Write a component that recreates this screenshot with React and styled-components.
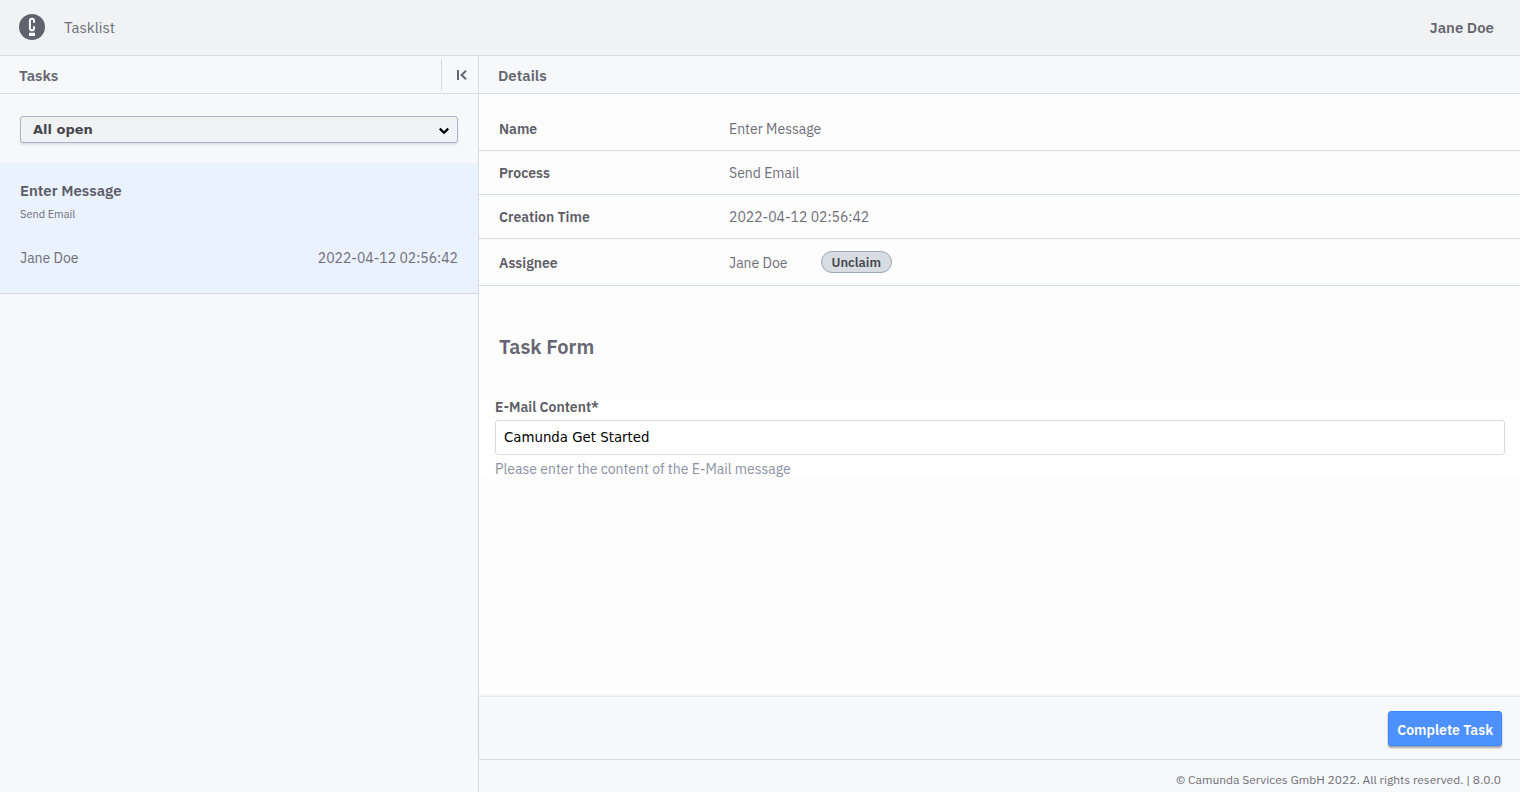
import React from 'react';
import styled, { createGlobalStyle, css } from 'styled-components';

const line = '#d5dae3';
const ink = '#666671';
const inkDark = '#5c5c66';
const inkLight = '#6e6e79';

const GlobalStyle = createGlobalStyle`
  *, *::before, *::after { box-sizing: border-box; }
  body {
    margin: 0;
    font-family: 'IBM Plex Sans', Roboto, 'Liberation Sans', sans-serif;
    font-size: 14px;
    line-height: 20px;
    color: ${ink};
    background: #f7f8fa;
  }
  h1, h2, h3, p, dl, dd, ul { margin: 0; padding: 0; }
  button, select, input { margin: 0; }
`;

const Page = styled.div`
  display: flex;
  flex-direction: column;
  min-height: 100vh;
`;

const Header = styled.header`
  display: flex;
  align-items: center;
  justify-content: space-between;
  height: 56px;
  padding: 0 26px 0 19px;
  background: #f1f2f4;
  border-bottom: 1px solid ${line};
  font-size: 15px;
`;

const Brand = styled.a`
  display: flex;
  align-items: center;
  gap: 19px;
  color: ${inkLight};
  text-decoration: none;

  > svg { margin-bottom: 2px; }
`;

const UserName = styled.span`
  font-weight: 600;
`;

const Columns = styled.main`
  flex: 1;
  display: grid;
  grid-template-columns: 479px minmax(0, 1fr);
`;

const Sidebar = styled.section`
  border-right: 1px solid ${line};
  background: #f7f8fa;
`;

const PanelHeader = styled.div`
  display: flex;
  align-items: center;
  justify-content: space-between;
  height: 38px;
  padding-left: 19px;
  background: #f7f8fa;
  border-bottom: 1px solid ${line};
`;

const PanelTitle = styled.h2`
  padding-top: 2px;
  font-size: 15px;
  font-weight: 600;
`;

const CollapseButton = styled.button`
  display: flex;
  align-items: center;
  justify-content: center;
  width: 37px;
  height: 32px;
  padding: 0 0 0 3px;
  border: 0;
  border-left: 1px solid ${line};
  background: none;
  color: ${ink};
`;

const FilterBar = styled.div`
  display: grid;
  padding: 22px 20px 20px;
`;

const SelectShell = styled.div`
  display: grid;
  align-items: center;

  > * { grid-area: 1 / 1; }
  > svg {
    justify-self: end;
    margin: 3px 9px 0 0;
    pointer-events: none;
  }
`;

const Select = styled.select`
  appearance: none;
  height: 27px;
  padding: 0 32px 1px 12px;
  border: 1px solid #a9b6c8;
  border-radius: 3px;
  background: #f1f2f4;
  box-shadow: 0 2px 2px rgba(60, 60, 75, 0.12);
  color: #45464e;
  font: bold 13px 'DejaVu Sans', sans-serif;
`;

const TaskList = styled.ul`
  list-style: none;
`;

const TaskItem = styled.li`
  display: flex;
  flex-direction: column;
  height: 131px;
  padding: 18px 20px 25px;
  border-bottom: 1px solid ${line};
  background: #eaf1ff;
`;

const TaskName = styled.h3`
  color: ${inkDark};
  font-size: 15px;
  font-weight: 600;
`;

const TaskProcess = styled.span`
  margin-top: 3px;
  color: ${inkLight};
  font-size: 11px;
`;

const TaskMeta = styled.div`
  display: flex;
  justify-content: space-between;
  margin-top: auto;
  color: ${inkLight};
`;

const Content = styled.section`
  display: flex;
  flex-direction: column;
  background: #fdfdfd;
`;

const DetailsTable = styled.table`
  width: 100%;
  margin-top: 13px;
  border-collapse: separate;
  border-spacing: 0;
`;

const cell = css`
  height: ${(p) => (p.$tall ? 47 : 44)}px;
  padding: ${(p) => (p.$tall ? 2 : 0)}px 0 0;
  border-bottom: 1px solid ${line};
  text-align: left;
`;

const Label = styled.th`
  ${cell}
  width: 250px;
  padding-left: 20px;
  color: ${inkDark};
  font-weight: 600;
`;

const Value = styled.td`
  ${cell}
  color: ${inkLight};
`;

const Assignee = styled.div`
  display: flex;
  align-items: center;
  gap: 34px;
`;

const PillButton = styled.button`
  height: 22px;
  margin-bottom: 2px;
  padding: 1px 10px 0 9px;
  border: 1px solid #9ba8b8;
  border-radius: 11px;
  background: #d8dce3;
  color: #45464e;
  font: 600 13px/20px 'IBM Plex Sans', Roboto, sans-serif;
`;

const FormTitle = styled.h2`
  margin: 48px 20px 38px;
  font-size: 20px;
  line-height: 26px;
  font-weight: 600;
`;

const Form = styled.form`
  display: flex;
  flex: 1;
  flex-direction: column;
`;

const Field = styled.div`
  display: flex;
  flex-direction: column;
  padding: 0 15px 0 16px;
  background: #fff;
`;

const FieldLabel = styled.label`
  padding-bottom: 4px;
  color: ${inkDark};
  font-weight: 600;
  line-height: 18px;
`;

const TextInput = styled.input`
  height: 35px;
  padding: 0 8px 1px;
  border: 1px solid ${line};
  border-radius: 3px;
  background: #fff;
  color: #000;
  font-family: 'DejaVu Sans', sans-serif;
`;

const Hint = styled.p`
  padding-top: 6px;
  color: #8b91a3;
  line-height: 16px;
`;

const Actions = styled.div`
  display: flex;
  justify-content: flex-end;
  margin-top: auto;
  padding: 14px 18px 13px;
  background: #f7f8fa;
  border-top: 1px solid #e6e8ec;
  box-shadow: 0 -1px 2px rgba(60, 60, 75, 0.07);
`;

const PrimaryButton = styled.button`
  height: 35px;
  padding: 2px 8px 0;
  border: 1px solid #3c85fb;
  border-radius: 3px;
  background: #4c91ff;
  box-shadow: 0 2px 2px rgba(0, 0, 0, 0.35);
  color: #fff;
  font: 600 14px/20px 'IBM Plex Sans', Roboto, sans-serif;
`;

const Footer = styled.footer`
  padding: 10px 19px 2px;
  background: #f7f8fa;
  border-top: 1px solid ${line};
  color: ${inkLight};
  font-size: 12px;
  text-align: right;
`;

function Logo() {
  return (
    <svg width="26" height="26" viewBox="0 0 26 26" aria-hidden="true">
      <circle cx="13" cy="13" r="13" fill="#62626e" />
      <path
        d="M15 8.8V6.6Q15 4.8 13 4.8Q10.9 4.8 10.9 6.8V14.2Q10.9 16.3 13 16.3Q15 16.3 15 14.2V12.2"
        fill="none"
        stroke="#fff"
        strokeWidth="2"
      />
      <path d="M10 18.8h6V22h-6z" fill="#fff" />
    </svg>
  );
}

const details = [
  ['Name', 'Enter Message'],
  ['Process', 'Send Email'],
  ['Creation Time', '2022-04-12 02:56:42'],
];

export default function App() {
  return (
    <Page>
      <GlobalStyle />
      <Header>
        <Brand href="#">
          <Logo />
          <span>Tasklist</span>
        </Brand>
        <UserName>Jane Doe</UserName>
      </Header>
      <Columns>
        <Sidebar>
          <PanelHeader>
            <PanelTitle>Tasks</PanelTitle>
            <CollapseButton type="button" aria-label="Collapse tasks">
              <svg width="11" height="10" viewBox="0 0 11 10" fill="none" stroke="currentColor" strokeWidth="2" aria-hidden="true">
                <path d="M2 0v10M10 0.8L5.6 5L10 9.2" />
              </svg>
            </CollapseButton>
          </PanelHeader>
          <FilterBar>
            <SelectShell>
              <Select aria-label="Filter tasks" defaultValue="open">
                <option value="open">All open</option>
              </Select>
              <svg width="10" height="8" viewBox="0 0 10 8" fill="none" stroke="#000" strokeWidth="2.2" aria-hidden="true">
                <path d="M0.8 1.6L5 5.8L9.2 1.6" />
              </svg>
            </SelectShell>
          </FilterBar>
          <TaskList>
            <TaskItem>
              <TaskName>Enter Message</TaskName>
              <TaskProcess>Send Email</TaskProcess>
              <TaskMeta>
                <span>Jane Doe</span>
                <span>2022-04-12 02:56:42</span>
              </TaskMeta>
            </TaskItem>
          </TaskList>
        </Sidebar>
        <Content>
          <PanelHeader>
            <PanelTitle>Details</PanelTitle>
          </PanelHeader>
          <DetailsTable>
            <tbody>
              {details.map(([label, value]) => (
                <tr key={label}>
                  <Label scope="row">{label}</Label>
                  <Value>{value}</Value>
                </tr>
              ))}
              <tr>
                <Label scope="row" $tall>Assignee</Label>
                <Value $tall>
                  <Assignee>
                    Jane Doe
                    <PillButton type="button">Unclaim</PillButton>
                  </Assignee>
                </Value>
              </tr>
            </tbody>
          </DetailsTable>
          <Form onSubmit={(event) => event.preventDefault()}>
            <FormTitle>Task Form</FormTitle>
            <Field>
              <FieldLabel htmlFor="email-content">E-Mail Content*</FieldLabel>
              <TextInput id="email-content" type="text" defaultValue="Camunda Get Started" />
              <Hint>Please enter the content of the E-Mail message</Hint>
            </Field>
            <Actions>
              <PrimaryButton type="submit">Complete Task</PrimaryButton>
            </Actions>
          </Form>
          <Footer>© Camunda Services GmbH 2022. All rights reserved. | 8.0.0</Footer>
        </Content>
      </Columns>
    </Page>
  );
}
